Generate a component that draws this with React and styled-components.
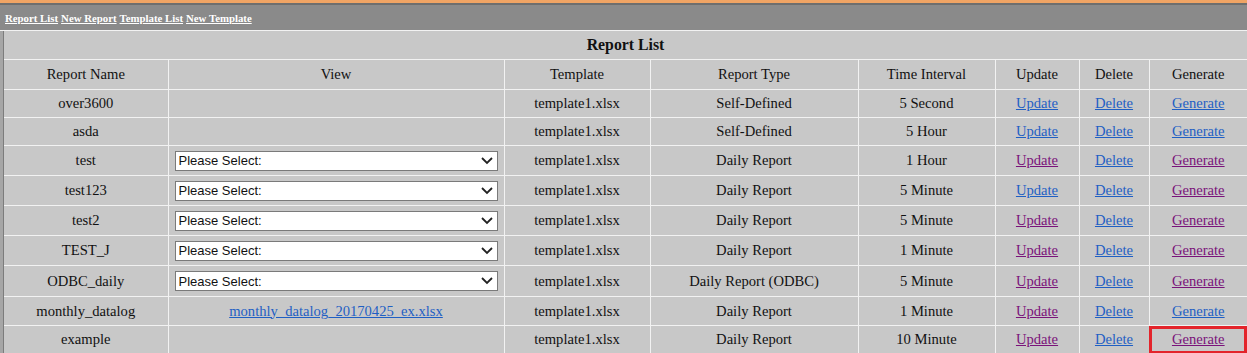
import React from "react";
import styled, { createGlobalStyle } from "styled-components";

const GlobalStyle = createGlobalStyle`
  html, body {
    margin: 0;
    padding: 0;
    background: #c8c8c8;
    font-family: "Liberation Serif", "Times New Roman", serif;
  }
`;

const BLUE = "#1f5fc4";
const PURPLE = "#7a137a";

const reports = [
  { name: "over3600", template: "template1.xlsx", type: "Self-Defined", interval: "5 Second", h: 28, visited: [false, false, false] },
  { name: "asda", template: "template1.xlsx", type: "Self-Defined", interval: "5 Hour", h: 28, visited: [false, false, false] },
  { name: "test", view: "select", template: "template1.xlsx", type: "Daily Report", interval: "1 Hour", h: 30, visited: [true, false, true] },
  { name: "test123", view: "select", template: "template1.xlsx", type: "Daily Report", interval: "5 Minute", h: 30, visited: [false, false, true] },
  { name: "test2", view: "select", template: "template1.xlsx", type: "Daily Report", interval: "5 Minute", h: 30, visited: [true, false, true] },
  { name: "TEST_J", view: "select", template: "template1.xlsx", type: "Daily Report", interval: "1 Minute", h: 30, visited: [true, false, true] },
  { name: "ODBC_daily", view: "select", template: "template1.xlsx", type: "Daily Report (ODBC)", interval: "5 Minute", h: 31, visited: [true, false, true] },
  { name: "monthly_datalog", view: "monthly_datalog_20170425_ex.xlsx", template: "template1.xlsx", type: "Daily Report", interval: "1 Minute", h: 29, visited: [true, false, false] },
  { name: "example", template: "template1.xlsx", type: "Daily Report", interval: "10 Minute", h: 28, visited: [true, false, true], mark: true },
];

const columns = [
  ["Report Name", 164],
  ["View", 336],
  ["Template", 146],
  ["Report Type", 208],
  ["Time Interval", 137],
  ["Update", 84],
  ["Delete", 70],
  ["Generate", 98],
];

const TopStrip = styled.div`
  height: 3px;
  background: #f0a464;
  border-bottom: 2px solid #6e6e6e;
`;

const MenuBar = styled.nav`
  height: 25px;
  background: #8a8a8a;
  display: flex;
  align-items: center;
  gap: 3px;
  padding-left: 5px;
  border-bottom: 1px solid #f2f2f2;
`;

const MenuLink = styled.a`
  color: #ffffff;
  font-weight: bold;
  font-size: 10.8px;
  text-decoration: underline;
  cursor: pointer;
`;

const Frame = styled.div`
  display: flex;
  background: #c8c8c8;
`;

const Gutter = styled.div`
  width: 3px;
  flex: none;
  background: #a6a6a6;
  border-right: 1px solid #7c7c7c;
`;

const Table = styled.table`
  border-collapse: collapse;
  table-layout: fixed;
  width: 1243px;
  font-size: 14.6px;
  color: #111;
  background: #c8c8c8;
`;

const Caption = styled.th`
  height: 28px;
  padding: 0;
  font-size: 15.8px;
  font-weight: bold;
  text-align: center;
  border-bottom: 1px solid #f2f2f2;
`;

const Row = styled.tr`
  height: ${(p) => p.$h}px;
`;

const Cell = styled.td`
  padding: 0;
  text-align: center;
  vertical-align: middle;
  border: 1px solid #f2f2f2;
  border-top: none;
  font-weight: normal;
  ${(p) => p.$mark && `outline: 3px solid #e3242b; outline-offset: -3px;`}
  &:first-child { border-left: none; }
  &:last-child { border-right: none; }
`;

const HeadCell = styled(Cell).attrs({ as: "th" })`
  height: 29px;
`;

const Action = styled.a`
  color: ${(p) => (p.$visited ? PURPLE : BLUE)};
  text-decoration: underline;
  cursor: pointer;
`;

const SelectWrap = styled.div`
  position: relative;
  margin: 0 6px;
  height: 20px;
`;

const Select = styled.select`
  appearance: none;
  width: 100%;
  height: 20px;
  box-sizing: border-box;
  border: 1px solid #7a7a7a;
  background: #ffffff;
  font-family: "Liberation Sans", Arial, sans-serif;
  font-size: 13px;
  color: #111;
  padding: 0 0 0 3px;
  margin: 0;
  display: block;
`;

const Chevron = styled.svg`
  position: absolute;
  right: 5px;
  top: 5px;
  width: 12px;
  height: 9px;
  pointer-events: none;
`;

function ViewCell({ view }) {
  if (view === "select") {
    return (
      <SelectWrap>
        <Select defaultValue="">
          <option value="">Please Select:</option>
        </Select>
        <Chevron viewBox="0 0 12 9">
          <path d="M1 2 L6 7 L11 2" fill="none" stroke="#222" strokeWidth="1.8" />
        </Chevron>
      </SelectWrap>
    );
  }
  if (view) return <Action>{view}</Action>;
  return null;
}

export default function App() {
  return (
    <>
      <GlobalStyle />
      <TopStrip />
      <MenuBar>
        <MenuLink>Report List</MenuLink>
        <MenuLink>New Report</MenuLink>
        <MenuLink>Template List</MenuLink>
        <MenuLink>New Template</MenuLink>
      </MenuBar>
      <Frame>
        <Gutter />
        <Table>
          <colgroup>
            {columns.map(([label, w]) => (
              <col key={label} style={{ width: w }} />
            ))}
          </colgroup>
          <thead>
            <tr>
              <Caption colSpan={8}>Report List</Caption>
            </tr>
            <tr>
              {columns.map(([label]) => (
                <HeadCell key={label}>{label}</HeadCell>
              ))}
            </tr>
          </thead>
          <tbody>
            {reports.map((r) => (
              <Row key={r.name} $h={r.h}>
                <Cell>{r.name}</Cell>
                <Cell><ViewCell view={r.view} /></Cell>
                <Cell>{r.template}</Cell>
                <Cell>{r.type}</Cell>
                <Cell>{r.interval}</Cell>
                <Cell><Action $visited={r.visited[0]}>Update </Action></Cell>
                <Cell><Action $visited={r.visited[1]}>Delete</Action></Cell>
                <Cell $mark={r.mark}><Action $visited={r.visited[2]}>Generate</Action></Cell>
              </Row>
            ))}
          </tbody>
        </Table>
      </Frame>
    </>
  );
}
